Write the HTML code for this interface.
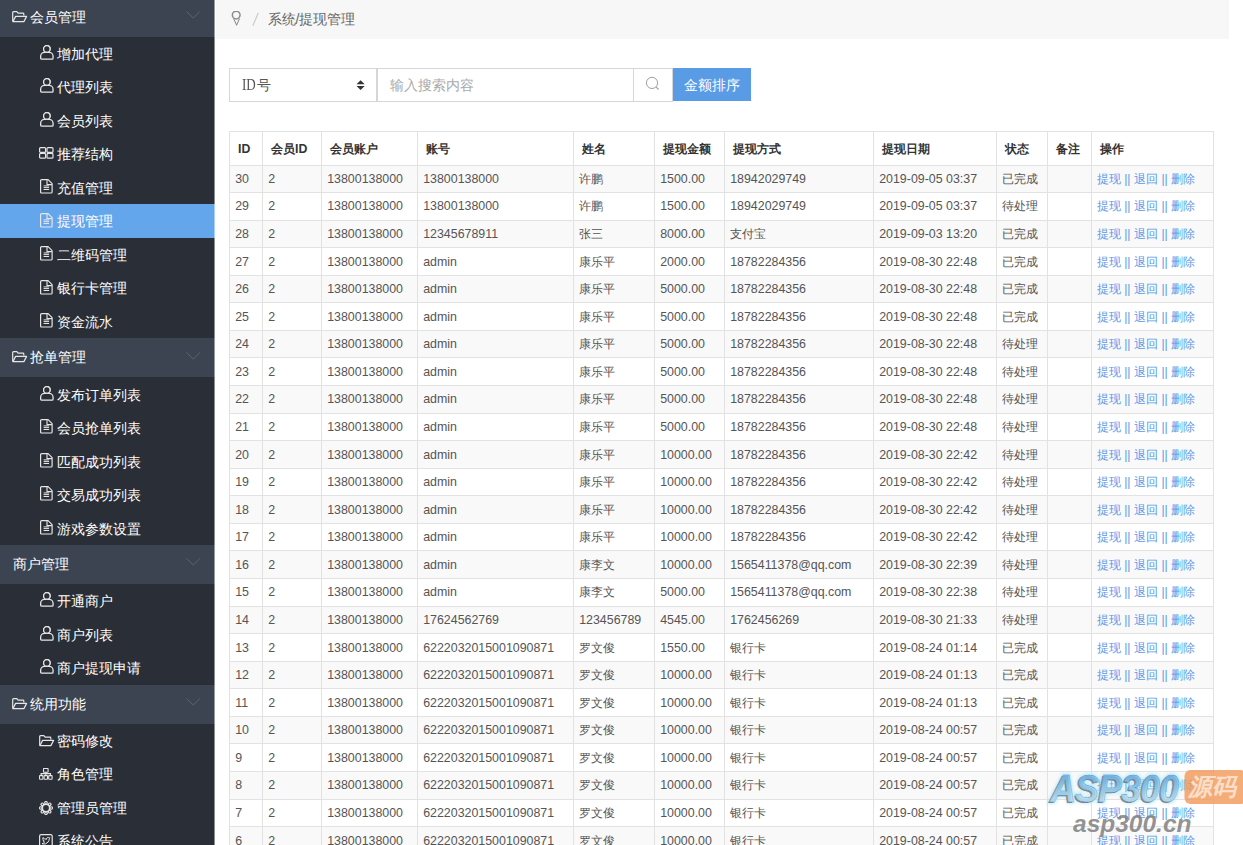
<!DOCTYPE html><html><head><meta charset="utf-8"><style>
html,body{margin:0;padding:0}
body{width:1243px;height:845px;overflow:hidden;position:relative;background:#fff;font-family:"Liberation Sans",sans-serif;}
#side{position:absolute;left:0;top:0;width:214.5px;height:845px;background:#2a2e36;overflow:hidden}
.gh{position:absolute;left:0;width:214.5px;height:39.2px;background:#3c4452;color:#fff;font-size:14px;line-height:39.2px}
.gh span{position:absolute;left:30.3px;top:0;font-weight:500}
.gh.noicon span{left:13px}
.gh svg.ic{position:absolute;left:12.3px;top:13px}
.gh svg.chev{position:absolute;left:185.2px;top:13.4px}
.it{position:absolute;left:0;width:214.5px;height:33.5px;color:#fff;font-size:14px;line-height:34px}
.it.on{background:#64a6ec}
.it span{position:absolute;left:57.2px;top:0;font-weight:500}
.it svg{position:absolute}
#crumb{position:absolute;left:216px;top:0;width:1013px;height:38.8px;background:#f7f7f7}
#grid{position:absolute;left:0;top:0;width:1243px;height:845px}
.stripe{position:absolute;left:229px;width:984px;background:#f9f9f9}
.hl{position:absolute;left:229px;width:985px;height:1px;background:#e2e2e2}
.vl{position:absolute;top:131px;width:1px;height:740px;background:#e2e2e2}
.th{position:absolute;font-size:12.3px;font-weight:bold;color:#333;white-space:nowrap}
.td{position:absolute;font-size:12.4px;color:#555;white-space:nowrap;height:26.56px;line-height:26.56px}
.op{color:#5a9be8;font-size:12px}
.op i{position:absolute;top:0;font-style:normal}
#sel{position:absolute;left:229px;top:68px;width:146px;height:32px;border:1px solid #d6d6d6;background:#fff}
#sel span{position:absolute;left:12px;top:0;line-height:32px;font-size:14px;color:#555}
#inp{position:absolute;left:377px;top:68px;width:255px;height:32px;border:1px solid #d6d6d6;background:#fff}
#inp span{position:absolute;left:12px;top:0;line-height:32px;font-size:14px;color:#aaa}
#sico{position:absolute;left:634px;top:68px;width:38px;height:32px;border-top:1px solid #d6d6d6;border-bottom:1px solid #d6d6d6;border-right:1px solid #d6d6d6;background:#fff}
#btn{position:absolute;left:673px;top:68px;width:78px;height:33px;background:#5a9be6;color:#fff;font-size:14px;line-height:35px;text-align:center}

.td .c{font-size:11.9px}

.th .hc{font-size:12px}
#side::after{content:"";position:absolute;left:214px;top:0;width:1px;height:845px;background:rgba(255,255,255,0.45)}

</style></head><body>

<div id="side">
<div class="gh" style="top:-2.40px"><svg class="ic" width="16" height="12" viewBox="0 0 16 12"><path d="M0.7 10.6V1.5Q0.7 0.7 1.5 0.7H4.9L6.1 2.2H11Q11.8 2.2 11.8 3V4.6" fill="none" stroke="#e6e6e6" stroke-width="1.2" stroke-linejoin="round"/><path d="M0.9 10.6L3.6 5.4H14.6L11.9 10.6Z" fill="none" stroke="#e6e6e6" stroke-width="1.2" stroke-linejoin="round"/></svg><span>会员管理</span><svg class="chev" width="16" height="9" viewBox="0 0 16 9"><path d="M1.5 0.6L8.3 7L14.8 0.6" fill="none" stroke="#5b6473" stroke-width="1"/></svg></div>
<div class="it" style="top:36.80px"><svg style="top:8.0px;left:39.8px" width="14" height="15" viewBox="0 0 14 15"><circle cx="6.85" cy="3.9" r="3.25" fill="none" stroke="#e6e6e6" stroke-width="1.3"/><path d="M0.65 13.2V11.3C0.65 9 2.5 7.4 4.6 7.4H9.1C11.2 7.4 13.05 9 13.05 11.3V13.2Q13.05 14.05 12.2 14.05H1.5Q0.65 14.05 0.65 13.2Z" fill="#2a2e36" stroke="#e6e6e6" stroke-width="1.3"/><circle cx="6.85" cy="3.9" r="3.25" fill="#2a2e36" stroke="#e6e6e6" stroke-width="1.3"/></svg><span>增加代理</span></div>
<div class="it" style="top:70.30px"><svg style="top:8.0px;left:39.8px" width="14" height="15" viewBox="0 0 14 15"><circle cx="6.85" cy="3.9" r="3.25" fill="none" stroke="#e6e6e6" stroke-width="1.3"/><path d="M0.65 13.2V11.3C0.65 9 2.5 7.4 4.6 7.4H9.1C11.2 7.4 13.05 9 13.05 11.3V13.2Q13.05 14.05 12.2 14.05H1.5Q0.65 14.05 0.65 13.2Z" fill="#2a2e36" stroke="#e6e6e6" stroke-width="1.3"/><circle cx="6.85" cy="3.9" r="3.25" fill="#2a2e36" stroke="#e6e6e6" stroke-width="1.3"/></svg><span>代理列表</span></div>
<div class="it" style="top:103.80px"><svg style="top:8.0px;left:39.8px" width="14" height="15" viewBox="0 0 14 15"><circle cx="6.85" cy="3.9" r="3.25" fill="none" stroke="#e6e6e6" stroke-width="1.3"/><path d="M0.65 13.2V11.3C0.65 9 2.5 7.4 4.6 7.4H9.1C11.2 7.4 13.05 9 13.05 11.3V13.2Q13.05 14.05 12.2 14.05H1.5Q0.65 14.05 0.65 13.2Z" fill="#2a2e36" stroke="#e6e6e6" stroke-width="1.3"/><circle cx="6.85" cy="3.9" r="3.25" fill="#2a2e36" stroke="#e6e6e6" stroke-width="1.3"/></svg><span>会员列表</span></div>
<div class="it" style="top:137.30px"><svg style="top:9.6px;left:39px" width="15" height="12" viewBox="0 0 15 12"><rect x="0.6" y="0.6" width="6" height="4.8" rx="1" fill="none" stroke="#e6e6e6" stroke-width="1.2"/><rect x="8" y="0.6" width="6" height="4.8" rx="1" fill="none" stroke="#e6e6e6" stroke-width="1.2"/><rect x="0.6" y="6.4" width="6" height="4.8" rx="1" fill="none" stroke="#e6e6e6" stroke-width="1.2"/><rect x="8" y="6.4" width="6" height="4.8" rx="1" fill="none" stroke="#e6e6e6" stroke-width="1.2"/></svg><span>推荐结构</span></div>
<div class="it" style="top:170.80px"><svg style="top:8.3px;left:40.1px" width="13" height="15" viewBox="0 0 13 15"><path d="M0.6 1.7Q0.6 0.6 1.7 0.6H8.1L12.1 4.7V12.9Q12.1 14 11 14H1.7Q0.6 14 0.6 12.9Z" fill="none" stroke="#e6e6e6" stroke-width="1.2" stroke-linejoin="round"/><path d="M7 0.8V5.6H11.9" fill="none" stroke="#e6e6e6" stroke-width="1.1"/><path d="M3.6 6.9H9.1M3.6 8.6H9.1M3.6 10.5H9.1" stroke="#e6e6e6" stroke-width="1"/></svg><span>充值管理</span></div>
<div class="it on" style="top:204.30px"><svg style="top:8.3px;left:40.1px" width="13" height="15" viewBox="0 0 13 15"><path d="M0.6 1.7Q0.6 0.6 1.7 0.6H8.1L12.1 4.7V12.9Q12.1 14 11 14H1.7Q0.6 14 0.6 12.9Z" fill="none" stroke="#e6e6e6" stroke-width="1.2" stroke-linejoin="round"/><path d="M7 0.8V5.6H11.9" fill="none" stroke="#e6e6e6" stroke-width="1.1"/><path d="M3.6 6.9H9.1M3.6 8.6H9.1M3.6 10.5H9.1" stroke="#e6e6e6" stroke-width="1"/></svg><span>提现管理</span></div>
<div class="it" style="top:237.80px"><svg style="top:8.3px;left:40.1px" width="13" height="15" viewBox="0 0 13 15"><path d="M0.6 1.7Q0.6 0.6 1.7 0.6H8.1L12.1 4.7V12.9Q12.1 14 11 14H1.7Q0.6 14 0.6 12.9Z" fill="none" stroke="#e6e6e6" stroke-width="1.2" stroke-linejoin="round"/><path d="M7 0.8V5.6H11.9" fill="none" stroke="#e6e6e6" stroke-width="1.1"/><path d="M3.6 6.9H9.1M3.6 8.6H9.1M3.6 10.5H9.1" stroke="#e6e6e6" stroke-width="1"/></svg><span>二维码管理</span></div>
<div class="it" style="top:271.30px"><svg style="top:8.3px;left:40.1px" width="13" height="15" viewBox="0 0 13 15"><path d="M0.6 1.7Q0.6 0.6 1.7 0.6H8.1L12.1 4.7V12.9Q12.1 14 11 14H1.7Q0.6 14 0.6 12.9Z" fill="none" stroke="#e6e6e6" stroke-width="1.2" stroke-linejoin="round"/><path d="M7 0.8V5.6H11.9" fill="none" stroke="#e6e6e6" stroke-width="1.1"/><path d="M3.6 6.9H9.1M3.6 8.6H9.1M3.6 10.5H9.1" stroke="#e6e6e6" stroke-width="1"/></svg><span>银行卡管理</span></div>
<div class="it" style="top:304.80px"><svg style="top:8.3px;left:40.1px" width="13" height="15" viewBox="0 0 13 15"><path d="M0.6 1.7Q0.6 0.6 1.7 0.6H8.1L12.1 4.7V12.9Q12.1 14 11 14H1.7Q0.6 14 0.6 12.9Z" fill="none" stroke="#e6e6e6" stroke-width="1.2" stroke-linejoin="round"/><path d="M7 0.8V5.6H11.9" fill="none" stroke="#e6e6e6" stroke-width="1.1"/><path d="M3.6 6.9H9.1M3.6 8.6H9.1M3.6 10.5H9.1" stroke="#e6e6e6" stroke-width="1"/></svg><span>资金流水</span></div>
<div class="gh" style="top:338.30px"><svg class="ic" width="16" height="12" viewBox="0 0 16 12"><path d="M0.7 10.6V1.5Q0.7 0.7 1.5 0.7H4.9L6.1 2.2H11Q11.8 2.2 11.8 3V4.6" fill="none" stroke="#e6e6e6" stroke-width="1.2" stroke-linejoin="round"/><path d="M0.9 10.6L3.6 5.4H14.6L11.9 10.6Z" fill="none" stroke="#e6e6e6" stroke-width="1.2" stroke-linejoin="round"/></svg><span>抢单管理</span><svg class="chev" width="16" height="9" viewBox="0 0 16 9"><path d="M1.5 0.6L8.3 7L14.8 0.6" fill="none" stroke="#5b6473" stroke-width="1"/></svg></div>
<div class="it" style="top:377.50px"><svg style="top:8.0px;left:39.8px" width="14" height="15" viewBox="0 0 14 15"><circle cx="6.85" cy="3.9" r="3.25" fill="none" stroke="#e6e6e6" stroke-width="1.3"/><path d="M0.65 13.2V11.3C0.65 9 2.5 7.4 4.6 7.4H9.1C11.2 7.4 13.05 9 13.05 11.3V13.2Q13.05 14.05 12.2 14.05H1.5Q0.65 14.05 0.65 13.2Z" fill="#2a2e36" stroke="#e6e6e6" stroke-width="1.3"/><circle cx="6.85" cy="3.9" r="3.25" fill="#2a2e36" stroke="#e6e6e6" stroke-width="1.3"/></svg><span>发布订单列表</span></div>
<div class="it" style="top:411.00px"><svg style="top:8.3px;left:40.1px" width="13" height="15" viewBox="0 0 13 15"><path d="M0.6 1.7Q0.6 0.6 1.7 0.6H8.1L12.1 4.7V12.9Q12.1 14 11 14H1.7Q0.6 14 0.6 12.9Z" fill="none" stroke="#e6e6e6" stroke-width="1.2" stroke-linejoin="round"/><path d="M7 0.8V5.6H11.9" fill="none" stroke="#e6e6e6" stroke-width="1.1"/><path d="M3.6 6.9H9.1M3.6 8.6H9.1M3.6 10.5H9.1" stroke="#e6e6e6" stroke-width="1"/></svg><span>会员抢单列表</span></div>
<div class="it" style="top:444.50px"><svg style="top:8.3px;left:40.1px" width="13" height="15" viewBox="0 0 13 15"><path d="M0.6 1.7Q0.6 0.6 1.7 0.6H8.1L12.1 4.7V12.9Q12.1 14 11 14H1.7Q0.6 14 0.6 12.9Z" fill="none" stroke="#e6e6e6" stroke-width="1.2" stroke-linejoin="round"/><path d="M7 0.8V5.6H11.9" fill="none" stroke="#e6e6e6" stroke-width="1.1"/><path d="M3.6 6.9H9.1M3.6 8.6H9.1M3.6 10.5H9.1" stroke="#e6e6e6" stroke-width="1"/></svg><span>匹配成功列表</span></div>
<div class="it" style="top:478.00px"><svg style="top:8.3px;left:40.1px" width="13" height="15" viewBox="0 0 13 15"><path d="M0.6 1.7Q0.6 0.6 1.7 0.6H8.1L12.1 4.7V12.9Q12.1 14 11 14H1.7Q0.6 14 0.6 12.9Z" fill="none" stroke="#e6e6e6" stroke-width="1.2" stroke-linejoin="round"/><path d="M7 0.8V5.6H11.9" fill="none" stroke="#e6e6e6" stroke-width="1.1"/><path d="M3.6 6.9H9.1M3.6 8.6H9.1M3.6 10.5H9.1" stroke="#e6e6e6" stroke-width="1"/></svg><span>交易成功列表</span></div>
<div class="it" style="top:511.50px"><svg style="top:8.3px;left:40.1px" width="13" height="15" viewBox="0 0 13 15"><path d="M0.6 1.7Q0.6 0.6 1.7 0.6H8.1L12.1 4.7V12.9Q12.1 14 11 14H1.7Q0.6 14 0.6 12.9Z" fill="none" stroke="#e6e6e6" stroke-width="1.2" stroke-linejoin="round"/><path d="M7 0.8V5.6H11.9" fill="none" stroke="#e6e6e6" stroke-width="1.1"/><path d="M3.6 6.9H9.1M3.6 8.6H9.1M3.6 10.5H9.1" stroke="#e6e6e6" stroke-width="1"/></svg><span>游戏参数设置</span></div>
<div class="gh noicon" style="top:545.00px"><span>商户管理</span><svg class="chev" width="16" height="9" viewBox="0 0 16 9"><path d="M1.5 0.6L8.3 7L14.8 0.6" fill="none" stroke="#5b6473" stroke-width="1"/></svg></div>
<div class="it" style="top:584.20px"><svg style="top:8.0px;left:39.8px" width="14" height="15" viewBox="0 0 14 15"><circle cx="6.85" cy="3.9" r="3.25" fill="none" stroke="#e6e6e6" stroke-width="1.3"/><path d="M0.65 13.2V11.3C0.65 9 2.5 7.4 4.6 7.4H9.1C11.2 7.4 13.05 9 13.05 11.3V13.2Q13.05 14.05 12.2 14.05H1.5Q0.65 14.05 0.65 13.2Z" fill="#2a2e36" stroke="#e6e6e6" stroke-width="1.3"/><circle cx="6.85" cy="3.9" r="3.25" fill="#2a2e36" stroke="#e6e6e6" stroke-width="1.3"/></svg><span>开通商户</span></div>
<div class="it" style="top:617.70px"><svg style="top:8.0px;left:39.8px" width="14" height="15" viewBox="0 0 14 15"><circle cx="6.85" cy="3.9" r="3.25" fill="none" stroke="#e6e6e6" stroke-width="1.3"/><path d="M0.65 13.2V11.3C0.65 9 2.5 7.4 4.6 7.4H9.1C11.2 7.4 13.05 9 13.05 11.3V13.2Q13.05 14.05 12.2 14.05H1.5Q0.65 14.05 0.65 13.2Z" fill="#2a2e36" stroke="#e6e6e6" stroke-width="1.3"/><circle cx="6.85" cy="3.9" r="3.25" fill="#2a2e36" stroke="#e6e6e6" stroke-width="1.3"/></svg><span>商户列表</span></div>
<div class="it" style="top:651.20px"><svg style="top:8.0px;left:39.8px" width="14" height="15" viewBox="0 0 14 15"><circle cx="6.85" cy="3.9" r="3.25" fill="none" stroke="#e6e6e6" stroke-width="1.3"/><path d="M0.65 13.2V11.3C0.65 9 2.5 7.4 4.6 7.4H9.1C11.2 7.4 13.05 9 13.05 11.3V13.2Q13.05 14.05 12.2 14.05H1.5Q0.65 14.05 0.65 13.2Z" fill="#2a2e36" stroke="#e6e6e6" stroke-width="1.3"/><circle cx="6.85" cy="3.9" r="3.25" fill="#2a2e36" stroke="#e6e6e6" stroke-width="1.3"/></svg><span>商户提现申请</span></div>
<div class="gh" style="top:684.70px"><svg class="ic" width="16" height="12" viewBox="0 0 16 12"><path d="M0.7 10.6V1.5Q0.7 0.7 1.5 0.7H4.9L6.1 2.2H11Q11.8 2.2 11.8 3V4.6" fill="none" stroke="#e6e6e6" stroke-width="1.2" stroke-linejoin="round"/><path d="M0.9 10.6L3.6 5.4H14.6L11.9 10.6Z" fill="none" stroke="#e6e6e6" stroke-width="1.2" stroke-linejoin="round"/></svg><span>统用功能</span><svg class="chev" width="16" height="9" viewBox="0 0 16 9"><path d="M1.5 0.6L8.3 7L14.8 0.6" fill="none" stroke="#5b6473" stroke-width="1"/></svg></div>
<div class="it" style="top:723.90px"><svg style="top:11.5px;left:39.0px" width="16" height="12" viewBox="0 0 16 12"><path d="M0.7 10.6V1.5Q0.7 0.7 1.5 0.7H4.9L6.1 2.2H11Q11.8 2.2 11.8 3V4.6" fill="none" stroke="#e6e6e6" stroke-width="1.2" stroke-linejoin="round"/><path d="M0.9 10.6L3.6 5.4H14.6L11.9 10.6Z" fill="none" stroke="#e6e6e6" stroke-width="1.2" stroke-linejoin="round"/></svg><span>密码修改</span></div>
<div class="it" style="top:757.40px"><svg style="top:10.7px;left:39.3px" width="14" height="12" viewBox="0 0 14 12"><rect x="4.5" y="0.5" width="4.6" height="3.8" rx="0.6" fill="none" stroke="#e6e6e6" stroke-width="1.1"/><path d="M6.8 4.3V5.6M2.1 7.6V5.6H11.5V7.6M6.8 5.6V7.6" fill="none" stroke="#e6e6e6" stroke-width="1.1"/><rect x="0.5" y="7.6" width="3.4" height="3.6" rx="0.5" fill="none" stroke="#e6e6e6" stroke-width="1.1"/><rect x="5.1" y="7.6" width="3.4" height="3.6" rx="0.5" fill="none" stroke="#e6e6e6" stroke-width="1.1"/><rect x="9.7" y="7.6" width="3.4" height="3.6" rx="0.5" fill="none" stroke="#e6e6e6" stroke-width="1.1"/></svg><span>角色管理</span></div>
<div class="it" style="top:790.90px"><svg style="top:9.8px;left:39.1px" width="14" height="14" viewBox="0 0 14 14"><circle cx="7.00" cy="1.80" r="1.85" fill="#e6e6e6"/><circle cx="10.68" cy="3.32" r="1.85" fill="#e6e6e6"/><circle cx="12.20" cy="7.00" r="1.85" fill="#e6e6e6"/><circle cx="10.68" cy="10.68" r="1.85" fill="#e6e6e6"/><circle cx="7.00" cy="12.20" r="1.85" fill="#e6e6e6"/><circle cx="3.32" cy="10.68" r="1.85" fill="#e6e6e6"/><circle cx="1.80" cy="7.00" r="1.85" fill="#e6e6e6"/><circle cx="3.32" cy="3.32" r="1.85" fill="#e6e6e6"/><circle cx="7" cy="7" r="4.6" fill="#e6e6e6"/><circle cx="7" cy="7" r="2.9" fill="#2a2e36"/><circle cx="7.00" cy="1.80" r="0.7" fill="#2a2e36"/><circle cx="10.68" cy="3.32" r="0.7" fill="#2a2e36"/><circle cx="12.20" cy="7.00" r="0.7" fill="#2a2e36"/><circle cx="10.68" cy="10.68" r="0.7" fill="#2a2e36"/><circle cx="7.00" cy="12.20" r="0.7" fill="#2a2e36"/><circle cx="3.32" cy="10.68" r="0.7" fill="#2a2e36"/><circle cx="1.80" cy="7.00" r="0.7" fill="#2a2e36"/><circle cx="3.32" cy="3.32" r="0.7" fill="#2a2e36"/></svg><span>管理员管理</span></div>
<div class="it" style="top:824.40px"><svg style="top:9.6px;left:39.3px" width="14" height="14" viewBox="0 0 14 14"><rect x="0.6" y="0.6" width="12.6" height="12.6" rx="1.6" fill="none" stroke="#e6e6e6" stroke-width="1.2"/><path d="M3 9.8Q6.5 11 9 8.2Q10.3 6.5 10.3 4.6L11 3.8L10.1 3.9Q9.5 3.2 8.6 3.4Q7.4 3.8 7.6 5.3Q5.4 5.2 3.9 3.6Q3.4 5.5 4.9 6.6L4.1 6.5Q4.4 7.8 5.6 8.1Q4.8 8.9 3 9.8Z" fill="none" stroke="#e6e6e6" stroke-width="1"/></svg><span>系统公告</span></div>
</div>
<div id="crumb">
<svg style="position:absolute;left:14.6px;top:10.6px" width="12" height="16" viewBox="0 0 12 16"><circle cx="5.2" cy="4.1" r="3.85" fill="none" stroke="#8c8c8c" stroke-width="1.5"/><path d="M2.6 7.6L5.6 14.1L8.5 7.6" fill="none" stroke="#8c8c8c" stroke-width="1.05" stroke-linejoin="round"/></svg>
<svg style="position:absolute;left:36px;top:12px" width="8" height="15" viewBox="0 0 8 15"><path d="M6.3 0.8L0.8 13.9" stroke="#c8c8c8" stroke-width="1.1"/></svg>
<span style="position:absolute;left:51.5px;top:11px;font-size:14px;line-height:16px;color:#666">系统/提现管理</span>
</div>
<div id="sbar">
<div id="sel"><b style="position:absolute;left:11.5px;top:0;line-height:32px;font-family:'Liberation Serif',serif;font-weight:normal;font-size:17px;color:#555;transform:scaleX(0.77);transform-origin:0 0">ID</b><i style="position:absolute;left:27.1px;top:0;line-height:32px;font-style:normal;font-size:14px;color:#555">号</i><svg style="position:absolute;left:125.8px;top:10.6px" width="10" height="11" viewBox="0 0 10 11"><path d="M0.5 4.3L4.6 0.3L8.7 4.3Z M0.5 6.1L4.6 10.1L8.7 6.1Z" fill="#333"/></svg></div>
<div id="inp"><span>输入搜索内容</span></div>
<div id="sico"><svg style="position:absolute;left:11px;top:6.5px" width="17" height="17" viewBox="0 0 17 17"><circle cx="7" cy="6.9" r="5.6" fill="none" stroke="#a0a0a0" stroke-width="1"/><path d="M11 10.9L13.6 13.5" stroke="#a0a0a0" stroke-width="1.1"/></svg></div>
<div id="btn">金额排序</div>
</div>

<div id="grid">
<div class="stripe" style="top:165px;height:27px"></div>
<div class="stripe" style="top:220px;height:27px"></div>
<div class="stripe" style="top:275px;height:27px"></div>
<div class="stripe" style="top:330px;height:27px"></div>
<div class="stripe" style="top:385px;height:28px"></div>
<div class="stripe" style="top:440px;height:28px"></div>
<div class="stripe" style="top:495px;height:28px"></div>
<div class="stripe" style="top:550px;height:28px"></div>
<div class="stripe" style="top:606px;height:27px"></div>
<div class="stripe" style="top:661px;height:27px"></div>
<div class="stripe" style="top:716px;height:27px"></div>
<div class="stripe" style="top:771px;height:28px"></div>
<div class="stripe" style="top:826px;height:28px"></div>
<div class="hl" style="top:131px"></div>
<div class="hl" style="top:165px"></div>
<div class="hl" style="top:192px"></div>
<div class="hl" style="top:220px"></div>
<div class="hl" style="top:247px"></div>
<div class="hl" style="top:275px"></div>
<div class="hl" style="top:302px"></div>
<div class="hl" style="top:330px"></div>
<div class="hl" style="top:357px"></div>
<div class="hl" style="top:385px"></div>
<div class="hl" style="top:413px"></div>
<div class="hl" style="top:440px"></div>
<div class="hl" style="top:468px"></div>
<div class="hl" style="top:495px"></div>
<div class="hl" style="top:523px"></div>
<div class="hl" style="top:550px"></div>
<div class="hl" style="top:578px"></div>
<div class="hl" style="top:606px"></div>
<div class="hl" style="top:633px"></div>
<div class="hl" style="top:661px"></div>
<div class="hl" style="top:688px"></div>
<div class="hl" style="top:716px"></div>
<div class="hl" style="top:743px"></div>
<div class="hl" style="top:771px"></div>
<div class="hl" style="top:799px"></div>
<div class="hl" style="top:826px"></div>
<div class="hl" style="top:854px"></div>
<div class="vl" style="left:229px"></div>
<div class="vl" style="left:262px"></div>
<div class="vl" style="left:321px"></div>
<div class="vl" style="left:417px"></div>
<div class="vl" style="left:573px"></div>
<div class="vl" style="left:654px"></div>
<div class="vl" style="left:724px"></div>
<div class="vl" style="left:873px"></div>
<div class="vl" style="left:996px"></div>
<div class="vl" style="left:1047px"></div>
<div class="vl" style="left:1091px"></div>
<div class="vl" style="left:1213px"></div>
<div class="th" style="left:238px;top:133px;height:33px;line-height:33px">ID</div>
<div class="th" style="left:271px;top:133px;height:33px;line-height:33px"><span class="hc">会</span><span class="hc">员</span>ID</div>
<div class="th" style="left:330px;top:133px;height:33px;line-height:33px"><span class="hc">会</span><span class="hc">员</span><span class="hc">账</span><span class="hc">户</span></div>
<div class="th" style="left:426px;top:133px;height:33px;line-height:33px"><span class="hc">账</span><span class="hc">号</span></div>
<div class="th" style="left:582px;top:133px;height:33px;line-height:33px"><span class="hc">姓</span><span class="hc">名</span></div>
<div class="th" style="left:663px;top:133px;height:33px;line-height:33px"><span class="hc">提</span><span class="hc">现</span><span class="hc">金</span><span class="hc">额</span></div>
<div class="th" style="left:733px;top:133px;height:33px;line-height:33px"><span class="hc">提</span><span class="hc">现</span><span class="hc">方</span><span class="hc">式</span></div>
<div class="th" style="left:882px;top:133px;height:33px;line-height:33px"><span class="hc">提</span><span class="hc">现</span><span class="hc">日</span><span class="hc">期</span></div>
<div class="th" style="left:1005px;top:133px;height:33px;line-height:33px"><span class="hc">状</span><span class="hc">态</span></div>
<div class="th" style="left:1056px;top:133px;height:33px;line-height:33px"><span class="hc">备</span><span class="hc">注</span></div>
<div class="th" style="left:1100px;top:133px;height:33px;line-height:33px"><span class="hc">操</span><span class="hc">作</span></div>
<div class="td" style="left:235.2px;top:165.91px">30</div>
<div class="td" style="left:268.2px;top:165.91px">2</div>
<div class="td" style="left:327.2px;top:165.91px">13800138000</div>
<div class="td" style="left:423.2px;top:165.91px">13800138000</div>
<div class="td" style="left:579.2px;top:165.91px"><span class="c">许鹏</span></div>
<div class="td" style="left:660.2px;top:165.91px">1500.00</div>
<div class="td" style="left:730.2px;top:165.91px">18942029749</div>
<div class="td" style="left:879.2px;top:165.91px">2019-09-05 03:37</div>
<div class="td" style="left:1002.2px;top:165.91px"><span class="c">已完成</span></div>
<div class="td op" style="left:1097px;top:165.91px"><i style="left:-0.3px">提现</i><i style="left:27.2px">||</i><i style="left:36.9px">退回</i><i style="left:64.5px">||</i><i style="left:74.2px">删除</i></div>
<div class="td" style="left:235.2px;top:193.48px">29</div>
<div class="td" style="left:268.2px;top:193.48px">2</div>
<div class="td" style="left:327.2px;top:193.48px">13800138000</div>
<div class="td" style="left:423.2px;top:193.48px">13800138000</div>
<div class="td" style="left:579.2px;top:193.48px"><span class="c">许鹏</span></div>
<div class="td" style="left:660.2px;top:193.48px">1500.00</div>
<div class="td" style="left:730.2px;top:193.48px">18942029749</div>
<div class="td" style="left:879.2px;top:193.48px">2019-09-05 03:37</div>
<div class="td" style="left:1002.2px;top:193.48px"><span class="c">待处理</span></div>
<div class="td op" style="left:1097px;top:193.48px"><i style="left:-0.3px">提现</i><i style="left:27.2px">||</i><i style="left:36.9px">退回</i><i style="left:64.5px">||</i><i style="left:74.2px">删除</i></div>
<div class="td" style="left:235.2px;top:221.05px">28</div>
<div class="td" style="left:268.2px;top:221.05px">2</div>
<div class="td" style="left:327.2px;top:221.05px">13800138000</div>
<div class="td" style="left:423.2px;top:221.05px">12345678911</div>
<div class="td" style="left:579.2px;top:221.05px"><span class="c">张三</span></div>
<div class="td" style="left:660.2px;top:221.05px">8000.00</div>
<div class="td" style="left:730.2px;top:221.05px"><span class="c">支付宝</span></div>
<div class="td" style="left:879.2px;top:221.05px">2019-09-03 13:20</div>
<div class="td" style="left:1002.2px;top:221.05px"><span class="c">已完成</span></div>
<div class="td op" style="left:1097px;top:221.05px"><i style="left:-0.3px">提现</i><i style="left:27.2px">||</i><i style="left:36.9px">退回</i><i style="left:64.5px">||</i><i style="left:74.2px">删除</i></div>
<div class="td" style="left:235.2px;top:248.62px">27</div>
<div class="td" style="left:268.2px;top:248.62px">2</div>
<div class="td" style="left:327.2px;top:248.62px">13800138000</div>
<div class="td" style="left:423.2px;top:248.62px">admin</div>
<div class="td" style="left:579.2px;top:248.62px"><span class="c">康乐平</span></div>
<div class="td" style="left:660.2px;top:248.62px">2000.00</div>
<div class="td" style="left:730.2px;top:248.62px">18782284356</div>
<div class="td" style="left:879.2px;top:248.62px">2019-08-30 22:48</div>
<div class="td" style="left:1002.2px;top:248.62px"><span class="c">已完成</span></div>
<div class="td op" style="left:1097px;top:248.62px"><i style="left:-0.3px">提现</i><i style="left:27.2px">||</i><i style="left:36.9px">退回</i><i style="left:64.5px">||</i><i style="left:74.2px">删除</i></div>
<div class="td" style="left:235.2px;top:276.19px">26</div>
<div class="td" style="left:268.2px;top:276.19px">2</div>
<div class="td" style="left:327.2px;top:276.19px">13800138000</div>
<div class="td" style="left:423.2px;top:276.19px">admin</div>
<div class="td" style="left:579.2px;top:276.19px"><span class="c">康乐平</span></div>
<div class="td" style="left:660.2px;top:276.19px">5000.00</div>
<div class="td" style="left:730.2px;top:276.19px">18782284356</div>
<div class="td" style="left:879.2px;top:276.19px">2019-08-30 22:48</div>
<div class="td" style="left:1002.2px;top:276.19px"><span class="c">已完成</span></div>
<div class="td op" style="left:1097px;top:276.19px"><i style="left:-0.3px">提现</i><i style="left:27.2px">||</i><i style="left:36.9px">退回</i><i style="left:64.5px">||</i><i style="left:74.2px">删除</i></div>
<div class="td" style="left:235.2px;top:303.76px">25</div>
<div class="td" style="left:268.2px;top:303.76px">2</div>
<div class="td" style="left:327.2px;top:303.76px">13800138000</div>
<div class="td" style="left:423.2px;top:303.76px">admin</div>
<div class="td" style="left:579.2px;top:303.76px"><span class="c">康乐平</span></div>
<div class="td" style="left:660.2px;top:303.76px">5000.00</div>
<div class="td" style="left:730.2px;top:303.76px">18782284356</div>
<div class="td" style="left:879.2px;top:303.76px">2019-08-30 22:48</div>
<div class="td" style="left:1002.2px;top:303.76px"><span class="c">已完成</span></div>
<div class="td op" style="left:1097px;top:303.76px"><i style="left:-0.3px">提现</i><i style="left:27.2px">||</i><i style="left:36.9px">退回</i><i style="left:64.5px">||</i><i style="left:74.2px">删除</i></div>
<div class="td" style="left:235.2px;top:331.33px">24</div>
<div class="td" style="left:268.2px;top:331.33px">2</div>
<div class="td" style="left:327.2px;top:331.33px">13800138000</div>
<div class="td" style="left:423.2px;top:331.33px">admin</div>
<div class="td" style="left:579.2px;top:331.33px"><span class="c">康乐平</span></div>
<div class="td" style="left:660.2px;top:331.33px">5000.00</div>
<div class="td" style="left:730.2px;top:331.33px">18782284356</div>
<div class="td" style="left:879.2px;top:331.33px">2019-08-30 22:48</div>
<div class="td" style="left:1002.2px;top:331.33px"><span class="c">待处理</span></div>
<div class="td op" style="left:1097px;top:331.33px"><i style="left:-0.3px">提现</i><i style="left:27.2px">||</i><i style="left:36.9px">退回</i><i style="left:64.5px">||</i><i style="left:74.2px">删除</i></div>
<div class="td" style="left:235.2px;top:358.90px">23</div>
<div class="td" style="left:268.2px;top:358.90px">2</div>
<div class="td" style="left:327.2px;top:358.90px">13800138000</div>
<div class="td" style="left:423.2px;top:358.90px">admin</div>
<div class="td" style="left:579.2px;top:358.90px"><span class="c">康乐平</span></div>
<div class="td" style="left:660.2px;top:358.90px">5000.00</div>
<div class="td" style="left:730.2px;top:358.90px">18782284356</div>
<div class="td" style="left:879.2px;top:358.90px">2019-08-30 22:48</div>
<div class="td" style="left:1002.2px;top:358.90px"><span class="c">待处理</span></div>
<div class="td op" style="left:1097px;top:358.90px"><i style="left:-0.3px">提现</i><i style="left:27.2px">||</i><i style="left:36.9px">退回</i><i style="left:64.5px">||</i><i style="left:74.2px">删除</i></div>
<div class="td" style="left:235.2px;top:386.47px">22</div>
<div class="td" style="left:268.2px;top:386.47px">2</div>
<div class="td" style="left:327.2px;top:386.47px">13800138000</div>
<div class="td" style="left:423.2px;top:386.47px">admin</div>
<div class="td" style="left:579.2px;top:386.47px"><span class="c">康乐平</span></div>
<div class="td" style="left:660.2px;top:386.47px">5000.00</div>
<div class="td" style="left:730.2px;top:386.47px">18782284356</div>
<div class="td" style="left:879.2px;top:386.47px">2019-08-30 22:48</div>
<div class="td" style="left:1002.2px;top:386.47px"><span class="c">待处理</span></div>
<div class="td op" style="left:1097px;top:386.47px"><i style="left:-0.3px">提现</i><i style="left:27.2px">||</i><i style="left:36.9px">退回</i><i style="left:64.5px">||</i><i style="left:74.2px">删除</i></div>
<div class="td" style="left:235.2px;top:414.04px">21</div>
<div class="td" style="left:268.2px;top:414.04px">2</div>
<div class="td" style="left:327.2px;top:414.04px">13800138000</div>
<div class="td" style="left:423.2px;top:414.04px">admin</div>
<div class="td" style="left:579.2px;top:414.04px"><span class="c">康乐平</span></div>
<div class="td" style="left:660.2px;top:414.04px">5000.00</div>
<div class="td" style="left:730.2px;top:414.04px">18782284356</div>
<div class="td" style="left:879.2px;top:414.04px">2019-08-30 22:48</div>
<div class="td" style="left:1002.2px;top:414.04px"><span class="c">待处理</span></div>
<div class="td op" style="left:1097px;top:414.04px"><i style="left:-0.3px">提现</i><i style="left:27.2px">||</i><i style="left:36.9px">退回</i><i style="left:64.5px">||</i><i style="left:74.2px">删除</i></div>
<div class="td" style="left:235.2px;top:441.61px">20</div>
<div class="td" style="left:268.2px;top:441.61px">2</div>
<div class="td" style="left:327.2px;top:441.61px">13800138000</div>
<div class="td" style="left:423.2px;top:441.61px">admin</div>
<div class="td" style="left:579.2px;top:441.61px"><span class="c">康乐平</span></div>
<div class="td" style="left:660.2px;top:441.61px">10000.00</div>
<div class="td" style="left:730.2px;top:441.61px">18782284356</div>
<div class="td" style="left:879.2px;top:441.61px">2019-08-30 22:42</div>
<div class="td" style="left:1002.2px;top:441.61px"><span class="c">待处理</span></div>
<div class="td op" style="left:1097px;top:441.61px"><i style="left:-0.3px">提现</i><i style="left:27.2px">||</i><i style="left:36.9px">退回</i><i style="left:64.5px">||</i><i style="left:74.2px">删除</i></div>
<div class="td" style="left:235.2px;top:469.18px">19</div>
<div class="td" style="left:268.2px;top:469.18px">2</div>
<div class="td" style="left:327.2px;top:469.18px">13800138000</div>
<div class="td" style="left:423.2px;top:469.18px">admin</div>
<div class="td" style="left:579.2px;top:469.18px"><span class="c">康乐平</span></div>
<div class="td" style="left:660.2px;top:469.18px">10000.00</div>
<div class="td" style="left:730.2px;top:469.18px">18782284356</div>
<div class="td" style="left:879.2px;top:469.18px">2019-08-30 22:42</div>
<div class="td" style="left:1002.2px;top:469.18px"><span class="c">待处理</span></div>
<div class="td op" style="left:1097px;top:469.18px"><i style="left:-0.3px">提现</i><i style="left:27.2px">||</i><i style="left:36.9px">退回</i><i style="left:64.5px">||</i><i style="left:74.2px">删除</i></div>
<div class="td" style="left:235.2px;top:496.75px">18</div>
<div class="td" style="left:268.2px;top:496.75px">2</div>
<div class="td" style="left:327.2px;top:496.75px">13800138000</div>
<div class="td" style="left:423.2px;top:496.75px">admin</div>
<div class="td" style="left:579.2px;top:496.75px"><span class="c">康乐平</span></div>
<div class="td" style="left:660.2px;top:496.75px">10000.00</div>
<div class="td" style="left:730.2px;top:496.75px">18782284356</div>
<div class="td" style="left:879.2px;top:496.75px">2019-08-30 22:42</div>
<div class="td" style="left:1002.2px;top:496.75px"><span class="c">待处理</span></div>
<div class="td op" style="left:1097px;top:496.75px"><i style="left:-0.3px">提现</i><i style="left:27.2px">||</i><i style="left:36.9px">退回</i><i style="left:64.5px">||</i><i style="left:74.2px">删除</i></div>
<div class="td" style="left:235.2px;top:524.32px">17</div>
<div class="td" style="left:268.2px;top:524.32px">2</div>
<div class="td" style="left:327.2px;top:524.32px">13800138000</div>
<div class="td" style="left:423.2px;top:524.32px">admin</div>
<div class="td" style="left:579.2px;top:524.32px"><span class="c">康乐平</span></div>
<div class="td" style="left:660.2px;top:524.32px">10000.00</div>
<div class="td" style="left:730.2px;top:524.32px">18782284356</div>
<div class="td" style="left:879.2px;top:524.32px">2019-08-30 22:42</div>
<div class="td" style="left:1002.2px;top:524.32px"><span class="c">待处理</span></div>
<div class="td op" style="left:1097px;top:524.32px"><i style="left:-0.3px">提现</i><i style="left:27.2px">||</i><i style="left:36.9px">退回</i><i style="left:64.5px">||</i><i style="left:74.2px">删除</i></div>
<div class="td" style="left:235.2px;top:551.89px">16</div>
<div class="td" style="left:268.2px;top:551.89px">2</div>
<div class="td" style="left:327.2px;top:551.89px">13800138000</div>
<div class="td" style="left:423.2px;top:551.89px">admin</div>
<div class="td" style="left:579.2px;top:551.89px"><span class="c">康李文</span></div>
<div class="td" style="left:660.2px;top:551.89px">10000.00</div>
<div class="td" style="left:730.2px;top:551.89px">1565411378@qq.com</div>
<div class="td" style="left:879.2px;top:551.89px">2019-08-30 22:39</div>
<div class="td" style="left:1002.2px;top:551.89px"><span class="c">待处理</span></div>
<div class="td op" style="left:1097px;top:551.89px"><i style="left:-0.3px">提现</i><i style="left:27.2px">||</i><i style="left:36.9px">退回</i><i style="left:64.5px">||</i><i style="left:74.2px">删除</i></div>
<div class="td" style="left:235.2px;top:579.46px">15</div>
<div class="td" style="left:268.2px;top:579.46px">2</div>
<div class="td" style="left:327.2px;top:579.46px">13800138000</div>
<div class="td" style="left:423.2px;top:579.46px">admin</div>
<div class="td" style="left:579.2px;top:579.46px"><span class="c">康李文</span></div>
<div class="td" style="left:660.2px;top:579.46px">5000.00</div>
<div class="td" style="left:730.2px;top:579.46px">1565411378@qq.com</div>
<div class="td" style="left:879.2px;top:579.46px">2019-08-30 22:38</div>
<div class="td" style="left:1002.2px;top:579.46px"><span class="c">待处理</span></div>
<div class="td op" style="left:1097px;top:579.46px"><i style="left:-0.3px">提现</i><i style="left:27.2px">||</i><i style="left:36.9px">退回</i><i style="left:64.5px">||</i><i style="left:74.2px">删除</i></div>
<div class="td" style="left:235.2px;top:607.03px">14</div>
<div class="td" style="left:268.2px;top:607.03px">2</div>
<div class="td" style="left:327.2px;top:607.03px">13800138000</div>
<div class="td" style="left:423.2px;top:607.03px">17624562769</div>
<div class="td" style="left:579.2px;top:607.03px">123456789</div>
<div class="td" style="left:660.2px;top:607.03px">4545.00</div>
<div class="td" style="left:730.2px;top:607.03px">1762456269</div>
<div class="td" style="left:879.2px;top:607.03px">2019-08-30 21:33</div>
<div class="td" style="left:1002.2px;top:607.03px"><span class="c">待处理</span></div>
<div class="td op" style="left:1097px;top:607.03px"><i style="left:-0.3px">提现</i><i style="left:27.2px">||</i><i style="left:36.9px">退回</i><i style="left:64.5px">||</i><i style="left:74.2px">删除</i></div>
<div class="td" style="left:235.2px;top:634.60px">13</div>
<div class="td" style="left:268.2px;top:634.60px">2</div>
<div class="td" style="left:327.2px;top:634.60px">13800138000</div>
<div class="td" style="left:423.2px;top:634.60px">6222032015001090871</div>
<div class="td" style="left:579.2px;top:634.60px"><span class="c">罗文俊</span></div>
<div class="td" style="left:660.2px;top:634.60px">1550.00</div>
<div class="td" style="left:730.2px;top:634.60px"><span class="c">银行卡</span></div>
<div class="td" style="left:879.2px;top:634.60px">2019-08-24 01:14</div>
<div class="td" style="left:1002.2px;top:634.60px"><span class="c">已完成</span></div>
<div class="td op" style="left:1097px;top:634.60px"><i style="left:-0.3px">提现</i><i style="left:27.2px">||</i><i style="left:36.9px">退回</i><i style="left:64.5px">||</i><i style="left:74.2px">删除</i></div>
<div class="td" style="left:235.2px;top:662.17px">12</div>
<div class="td" style="left:268.2px;top:662.17px">2</div>
<div class="td" style="left:327.2px;top:662.17px">13800138000</div>
<div class="td" style="left:423.2px;top:662.17px">6222032015001090871</div>
<div class="td" style="left:579.2px;top:662.17px"><span class="c">罗文俊</span></div>
<div class="td" style="left:660.2px;top:662.17px">10000.00</div>
<div class="td" style="left:730.2px;top:662.17px"><span class="c">银行卡</span></div>
<div class="td" style="left:879.2px;top:662.17px">2019-08-24 01:13</div>
<div class="td" style="left:1002.2px;top:662.17px"><span class="c">已完成</span></div>
<div class="td op" style="left:1097px;top:662.17px"><i style="left:-0.3px">提现</i><i style="left:27.2px">||</i><i style="left:36.9px">退回</i><i style="left:64.5px">||</i><i style="left:74.2px">删除</i></div>
<div class="td" style="left:235.2px;top:689.74px">11</div>
<div class="td" style="left:268.2px;top:689.74px">2</div>
<div class="td" style="left:327.2px;top:689.74px">13800138000</div>
<div class="td" style="left:423.2px;top:689.74px">6222032015001090871</div>
<div class="td" style="left:579.2px;top:689.74px"><span class="c">罗文俊</span></div>
<div class="td" style="left:660.2px;top:689.74px">10000.00</div>
<div class="td" style="left:730.2px;top:689.74px"><span class="c">银行卡</span></div>
<div class="td" style="left:879.2px;top:689.74px">2019-08-24 01:13</div>
<div class="td" style="left:1002.2px;top:689.74px"><span class="c">已完成</span></div>
<div class="td op" style="left:1097px;top:689.74px"><i style="left:-0.3px">提现</i><i style="left:27.2px">||</i><i style="left:36.9px">退回</i><i style="left:64.5px">||</i><i style="left:74.2px">删除</i></div>
<div class="td" style="left:235.2px;top:717.31px">10</div>
<div class="td" style="left:268.2px;top:717.31px">2</div>
<div class="td" style="left:327.2px;top:717.31px">13800138000</div>
<div class="td" style="left:423.2px;top:717.31px">6222032015001090871</div>
<div class="td" style="left:579.2px;top:717.31px"><span class="c">罗文俊</span></div>
<div class="td" style="left:660.2px;top:717.31px">10000.00</div>
<div class="td" style="left:730.2px;top:717.31px"><span class="c">银行卡</span></div>
<div class="td" style="left:879.2px;top:717.31px">2019-08-24 00:57</div>
<div class="td" style="left:1002.2px;top:717.31px"><span class="c">已完成</span></div>
<div class="td op" style="left:1097px;top:717.31px"><i style="left:-0.3px">提现</i><i style="left:27.2px">||</i><i style="left:36.9px">退回</i><i style="left:64.5px">||</i><i style="left:74.2px">删除</i></div>
<div class="td" style="left:235.2px;top:744.88px">9</div>
<div class="td" style="left:268.2px;top:744.88px">2</div>
<div class="td" style="left:327.2px;top:744.88px">13800138000</div>
<div class="td" style="left:423.2px;top:744.88px">6222032015001090871</div>
<div class="td" style="left:579.2px;top:744.88px"><span class="c">罗文俊</span></div>
<div class="td" style="left:660.2px;top:744.88px">10000.00</div>
<div class="td" style="left:730.2px;top:744.88px"><span class="c">银行卡</span></div>
<div class="td" style="left:879.2px;top:744.88px">2019-08-24 00:57</div>
<div class="td" style="left:1002.2px;top:744.88px"><span class="c">已完成</span></div>
<div class="td op" style="left:1097px;top:744.88px"><i style="left:-0.3px">提现</i><i style="left:27.2px">||</i><i style="left:36.9px">退回</i><i style="left:64.5px">||</i><i style="left:74.2px">删除</i></div>
<div class="td" style="left:235.2px;top:772.45px">8</div>
<div class="td" style="left:268.2px;top:772.45px">2</div>
<div class="td" style="left:327.2px;top:772.45px">13800138000</div>
<div class="td" style="left:423.2px;top:772.45px">6222032015001090871</div>
<div class="td" style="left:579.2px;top:772.45px"><span class="c">罗文俊</span></div>
<div class="td" style="left:660.2px;top:772.45px">10000.00</div>
<div class="td" style="left:730.2px;top:772.45px"><span class="c">银行卡</span></div>
<div class="td" style="left:879.2px;top:772.45px">2019-08-24 00:57</div>
<div class="td" style="left:1002.2px;top:772.45px"><span class="c">已完成</span></div>
<div class="td op" style="left:1097px;top:772.45px"><i style="left:-0.3px">提现</i><i style="left:27.2px">||</i><i style="left:36.9px">退回</i><i style="left:64.5px">||</i><i style="left:74.2px">删除</i></div>
<div class="td" style="left:235.2px;top:800.02px">7</div>
<div class="td" style="left:268.2px;top:800.02px">2</div>
<div class="td" style="left:327.2px;top:800.02px">13800138000</div>
<div class="td" style="left:423.2px;top:800.02px">6222032015001090871</div>
<div class="td" style="left:579.2px;top:800.02px"><span class="c">罗文俊</span></div>
<div class="td" style="left:660.2px;top:800.02px">10000.00</div>
<div class="td" style="left:730.2px;top:800.02px"><span class="c">银行卡</span></div>
<div class="td" style="left:879.2px;top:800.02px">2019-08-24 00:57</div>
<div class="td" style="left:1002.2px;top:800.02px"><span class="c">已完成</span></div>
<div class="td op" style="left:1097px;top:800.02px"><i style="left:-0.3px">提现</i><i style="left:27.2px">||</i><i style="left:36.9px">退回</i><i style="left:64.5px">||</i><i style="left:74.2px">删除</i></div>
<div class="td" style="left:235.2px;top:827.59px">6</div>
<div class="td" style="left:268.2px;top:827.59px">2</div>
<div class="td" style="left:327.2px;top:827.59px">13800138000</div>
<div class="td" style="left:423.2px;top:827.59px">6222032015001090871</div>
<div class="td" style="left:579.2px;top:827.59px"><span class="c">罗文俊</span></div>
<div class="td" style="left:660.2px;top:827.59px">10000.00</div>
<div class="td" style="left:730.2px;top:827.59px"><span class="c">银行卡</span></div>
<div class="td" style="left:879.2px;top:827.59px">2019-08-24 00:57</div>
<div class="td" style="left:1002.2px;top:827.59px"><span class="c">已完成</span></div>
<div class="td op" style="left:1097px;top:827.59px"><i style="left:-0.3px">提现</i><i style="left:27.2px">||</i><i style="left:36.9px">退回</i><i style="left:64.5px">||</i><i style="left:74.2px">删除</i></div>
</div>
<svg style="position:absolute;left:1030px;top:755px" width="213" height="90" viewBox="0 0 213 90">
<defs>
<linearGradient id="wg" x1="0" y1="0" x2="0" y2="1"><stop offset="0" stop-color="#5a9fe2"/><stop offset="0.45" stop-color="#8fd0f2"/><stop offset="1" stop-color="#eafafd"/></linearGradient>
<filter id="gl" x="-20%" y="-40%" width="140%" height="180%"><feGaussianBlur stdDeviation="1.6"/></filter>
</defs>
<rect x="154.5" y="15" width="62" height="34" rx="6" fill="#f29a5a" fill-opacity="0.82"/>
<text x="157.5" y="39.5" font-family="Liberation Sans" font-style="italic" font-weight="bold" font-size="24" fill="#fde6d6" fill-opacity="0.9">源码</text>
<g transform="translate(20,46.5) scale(0.92,1)">
<text x="0" y="0" font-family="Liberation Sans" font-weight="bold" font-style="italic" font-size="39" fill="none" stroke="#a8e6f6" stroke-width="4" opacity="0.65" filter="url(#gl)" letter-spacing="-1">ASP300</text>
<text x="-1.4" y="1.6" font-family="Liberation Sans" font-weight="bold" font-style="italic" font-size="39" fill="#666" fill-opacity="0.8" letter-spacing="-1">ASP300</text>
<text x="0" y="0" font-family="Liberation Sans" font-weight="bold" font-style="italic" font-size="39" fill="url(#wg)" fill-opacity="0.8" stroke="#4a8fd6" stroke-width="0.4" letter-spacing="-1">ASP300</text>
</g>
<text x="43" y="77" font-family="Liberation Sans" font-weight="bold" font-style="italic" font-size="24.5" fill="#808080" fill-opacity="0.85">asp300.cn</text>
</svg>

</body></html>
